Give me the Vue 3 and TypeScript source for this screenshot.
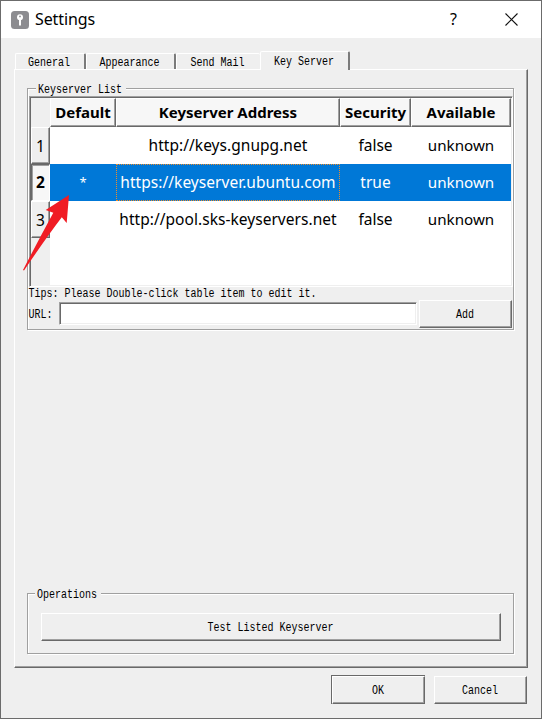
<script setup lang="ts">
interface Tab { label: string; width: number; active?: boolean }
interface Server { id: number; mark: string; url: string; security: string; available: string; selected?: boolean }

const tabs: Tab[] = [
  { label: 'General', width: 71 },
  { label: 'Appearance', width: 90 },
  { label: 'Send Mail', width: 84 },
  { label: 'Key Server', width: 90, active: true },
]
const columns = ['Default', 'Keyserver Address', 'Security', 'Available']
const servers: Server[] = [
  { id: 1, mark: '', url: 'http://keys.gnupg.net', security: 'false', available: 'unknown' },
  { id: 2, mark: '*', url: 'https://keyserver.ubuntu.com', security: 'true', available: 'unknown', selected: true },
  { id: 3, mark: '', url: 'http://pool.sks-keyservers.net', security: 'false', available: 'unknown' },
]
</script>

<template>
  <div class="window">
    <header class="titlebar">
      <svg class="app-icon" width="18" height="18" viewBox="0 0 18 18">
        <rect width="18" height="18" rx="3.5" fill="#8c8c90" />
        <circle cx="9" cy="6.2" r="3" fill="#fff" />
        <circle cx="9" cy="5.4" r="0.9" fill="#8c8c90" />
        <path d="M8 8h2v6l-1 1-1-1z" fill="#fff" />
      </svg>
      <span class="title">Settings</span>
      <span class="help">?</span>
      <svg class="close" width="13" height="13" viewBox="0 0 13 13">
        <path d="M.5.5l12 12M12.5.5l-12 12" stroke="#111" stroke-width="1.1" fill="none" />
      </svg>
    </header>

    <main class="body">
      <nav class="tabs">
        <div v-for="t in tabs" :key="t.label" class="tab" :class="{ active: t.active }" :style="{ width: t.width + 'px' }">
          <span class="mono">{{ t.label }}</span>
        </div>
      </nav>

      <section class="pane">
        <div class="group servers">
          <div class="legend"><span class="mono">Keyserver List</span></div>
          <div class="table">
            <div class="row head">
              <div class="corner"></div>
              <div v-for="c in columns" :key="c" class="th"><span>{{ c }}</span></div>
            </div>
            <div v-for="s in servers" :key="s.id" class="row" :class="{ selected: s.selected }">
              <div class="num">{{ s.id }}</div>
              <div class="td mark">{{ s.mark }}</div>
              <div class="td url">{{ s.url }}</div>
              <div class="td">{{ s.security }}</div>
              <div class="td">{{ s.available }}</div>
            </div>
            <div class="filler"></div>
          </div>
          <div class="tips"><span class="mono">Tips: Please Double-click table item to edit it.</span></div>
          <div class="form">
            <span class="mono label">URL:</span>
            <input class="field" type="text" />
            <button class="btn add"><span class="mono">Add</span></button>
          </div>
        </div>

        <div class="group ops">
          <div class="legend"><span class="mono">Operations</span></div>
          <button class="btn test"><span class="mono">Test Listed Keyserver</span></button>
        </div>
      </section>

      <footer class="actions">
        <div class="default-ring"><button class="btn"><span class="mono">OK</span></button></div>
        <button class="btn cancel"><span class="mono">Cancel</span></button>
      </footer>
    </main>

    <svg class="pointer" width="50" height="80" viewBox="0 0 50 80">
      <path d="M47 1L44.7 29 39.8 23.3Q24 44 2 76.5L1 76Q17 45 31.3 18.7L23.7 16Z" fill="#f01c24" />
    </svg>
  </div>
</template>

<style>
body { margin: 0; overflow: hidden; }
</style>

<style scoped>
* { box-sizing: border-box; }
.window {
  position: relative; width: 542px; height: 719px; display: flex; flex-direction: column;
  border: 1px solid #6b6b6b; background: #efefef; color: #000;
  font: 16px/20px "Noto Sans", "Open Sans", sans-serif;
}
.mono {
  display: inline-block; font: 10px/12px "Liberation Mono", monospace; white-space: pre;
  transform: translate(-0.5px, 2px) scaleY(1.2); color: #000;
}
.titlebar { flex: none; height: 37px; background: #fff; display: flex; align-items: center; padding-left: 10px; }
.app-icon { flex: none; }
.title { margin: -2px 0 0 6px; width: 408px; line-height: 22px; letter-spacing: -0.1px; }
.help { width: 16px; margin: -2px 0 0 7px; font-size: 16px; }
.close { margin-left: 39px; margin-top: -1px; }
.body { flex: 1; padding: 13px 13px 0; }
.tabs { height: 18px; display: flex; align-items: flex-end; padding-left: 1px; }
.tab {
  height: 16px; display: flex; align-items: center; justify-content: center; padding-right: 1px;
  border: solid; border-width: 1px 2px 0 1px; border-color: #fff #7b7b7b transparent #fff; border-radius: 2px 2px 0 0;
}
.tab .mono { margin-top: 1px; }
.tab:nth-child(3) { border-right: 0; }
.tab.active { height: 19px; margin-bottom: -1px; position: relative; background: #efefef; }
.tab.active .mono { margin-top: 0; margin-left: 1px; }
.pane {
  width: 514px; height: 599px; padding: 18px 11px 0 12px; display: flex; flex-direction: column; justify-content: space-between;
  border: 1px solid; border-color: #fff #696969 #696969 #fff; box-shadow: inset -1px -1px #a0a0a0;
}
.group { border: 1px solid #a0a0a0; box-shadow: inset 1px 1px #fff, 1px 1px #fff; width: 487px; }
.legend { width: 90px; height: 12px; margin: -6px 0 0 7px; padding-left: 3px; background: #efefef; display: flex; }
.legend .mono { margin-left: -0.5px; }
.servers { height: 242px; padding-left: 1px; }
.table {
  width: 484px; height: 191px; margin-top: 1px; border: 1px solid; border-color: #a0a0a0 #fff #fff #a0a0a0;
  box-shadow: inset 1px 1px #696969, inset -1px -1px #efefef; padding: 1px; display: flex; flex-direction: column; background: #fff;
}
.row {
  display: grid; grid-template-columns: 19px 66px 224px 71px 100px; grid-template-rows: 100%;
  height: 37px; flex: none; text-align: center;
}
.row.head { height: 29px; }
.corner { background: #efefef; }
.th, .num { background: #f7f7f7; border: 1px solid; border-color: #fff #696969 #696969 #fff; box-shadow: inset -1px -1px #a0a0a0; }
.th { font-size: 15px; font-weight: 700; line-height: 26px; white-space: nowrap; display: flex; justify-content: center; }
.num { font-size: 15.5px; line-height: 36px; background: #efefef; }
.td { font-size: 15.5px; line-height: 37px; white-space: nowrap; }
.td:last-child { font-size: 15.2px; }
.td.mark { font-size: 13px; line-height: 37px; }
.td.url { border: 1px dotted transparent; line-height: 35px; display: flex; justify-content: center; letter-spacing: 0.04px; }
.selected .td { background: #0078d7; color: #fff; }
.selected .url { border-color: #f08c28; }
.selected .num { font-weight: 700; background: #f7f7f7; border-color: #696969 #fff #fff #696969; box-shadow: inset 1px 1px #a0a0a0; line-height: 35px; }
.filler { flex: 1; width: 19px; background: #efefef; }
.tips { height: 13px; display: flex; }
.form { display: flex; height: 28px; }
.label { width: 24px; margin: 8px 6px 0 0; }
.field {
  width: 358px; height: 23px; margin: 2px 2px 0 0; padding: 0 4px; outline: 0; border: 1px solid; border-color: #a0a0a0 #fff #fff #a0a0a0;
  box-shadow: inset 1px 1px #696969, inset -1px -1px #efefef; background: #fff; border-radius: 0;
}
.btn {
  width: 93px; height: 28px; padding: 0; display: flex; align-items: center; justify-content: center; background: #efefef;
  border: 1px solid; border-color: #fff #696969 #696969 #fff; box-shadow: inset -1px -1px #a0a0a0; border-radius: 0;
}
.ops { height: 61px; margin-bottom: 13px; }
.ops .legend { width: 66px; }
.test { width: 460px; margin: 13px 0 0 13px; }
.actions { display: flex; padding: 7px 0 0 317px; gap: 9px; }
.default-ring { width: 94px; height: 29px; border: 1px solid #696969; border-width: 1px 0 0 1px; }
.cancel { margin-top: 1px; }
.pointer { position: absolute; left: 21px; top: 193px; }
</style>
